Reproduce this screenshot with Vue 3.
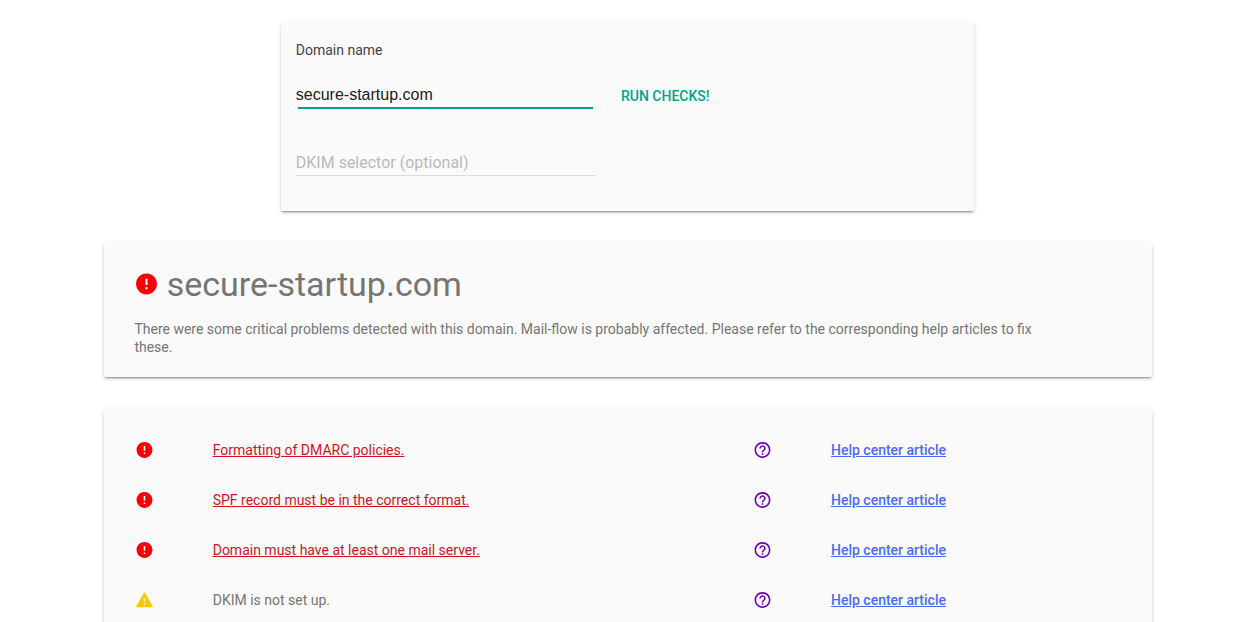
<script setup>
import { ref } from 'vue'

const domain = ref('secure-startup.com')
const selector = ref('')

const checks = [
  { level: 'error', text: 'Formatting of DMARC policies.' },
  { level: 'error', text: 'SPF record must be in the correct format.' },
  { level: 'error', text: 'Domain must have at least one mail server.' },
  { level: 'warning', text: 'DKIM is not set up.' },
]

const paths = {
  error: 'M12 2C6.48 2 2 6.48 2 12s4.48 10 10 10 10-4.48 10-10S17.52 2 12 2zm1 15h-2v-2h2v2zm0-4h-2V7h2v6z',
  warning: 'M1 21h22L12 2 1 21zm12-3h-2v-2h2v2zm0-4h-2v-4h2v4z',
  help: 'M11 18h2v-2h-2v2zm1-16C6.48 2 2 6.48 2 12s4.48 10 10 10 10-4.48 10-10S17.52 2 12 2zm0 18c-4.41 0-8-3.59-8-8s3.59-8 8-8 8 3.59 8 8-3.59 8-8 8zm0-14c-2.21 0-4 1.79-4 4h2c0-1.1.9-2 2-2s2 .9 2 2c0 2-3 1.75-3 5h2c0-2.25 3-2.5 3-5 0-2.21-1.79-4-4-4z',
}
</script>

<template>
  <main class="page">
    <form class="card form" @submit.prevent>
      <label class="label" for="domain">Domain name</label>
      <div class="line">
        <div class="field focused">
          <input id="domain" v-model="domain" class="input" type="text" />
        </div>
        <button class="run" type="submit">RUN CHECKS!</button>
      </div>
      <div class="field second">
        <input v-model="selector" class="input" type="text" placeholder="DKIM selector (optional)" />
      </div>
    </form>

    <section class="card summary">
      <h1 class="title">
        <svg class="icon large error" viewBox="0 0 24 24"><path :d="paths.error" /></svg>
        <span>{{ domain }}</span>
      </h1>
      <p class="message">
        There were some critical problems detected with this domain. Mail-flow is probably affected.
        Please refer to the corresponding help articles to fix these.
      </p>
    </section>

    <section class="card results">
      <div v-for="check in checks" :key="check.text" class="row">
        <svg class="icon" :class="check.level" viewBox="0 0 24 24"><path :d="paths[check.level]" /></svg>
        <span class="check" :class="{ failed: check.level === 'error' }">{{ check.text }}</span>
        <svg class="icon help" viewBox="0 0 24 24"><path :d="paths.help" /></svg>
        <a class="article" href="#">Help center article</a>
      </div>
    </section>
  </main>
</template>

<style>
html,
body {
  overflow: hidden;
  background: #fff;
}
</style>

<style scoped>
.page {
  box-sizing: border-box;
  height: 622px;
  overflow: hidden;
  padding-top: 23px;
  display: flex;
  flex-direction: column;
  align-items: center;
  font: 14px/18px Roboto, sans-serif;
  color: #757575;
}
.card {
  box-sizing: border-box;
  flex: none;
  background: #fafafa;
  border-radius: 2px;
  box-shadow: 0 2px 2px 0 rgba(0, 0, 0, 0.14), 0 1px 5px 0 rgba(0, 0, 0, 0.12),
    0 3px 1px -2px rgba(0, 0, 0, 0.2);
}
.form {
  width: 693px;
  height: 188px;
  margin-left: 1px;
  padding: 18px 14.8px;
}
.label {
  display: block;
  color: #444;
}
.line {
  display: flex;
  align-items: flex-start;
  margin-top: 18px;
}
.field {
  position: relative;
  width: 300px;
  height: 31px;
  box-sizing: border-box;
  border-bottom: 1px solid #dcdcdc;
}
.focused {
  height: 32px;
}
.focused::after {
  content: '';
  position: absolute;
  left: 2px;
  right: 3px;
  bottom: -1px;
  height: 2px;
  background: #009e8c;
}
.second {
  margin-top: 36px;
}
.input {
  display: block;
  width: 100%;
  height: 30px;
  margin: 0;
  padding: 5px 0 0;
  box-sizing: border-box;
  border: 0;
  outline: 0;
  background: transparent;
  font: 16px/20px "Liberation Sans", Arial, sans-serif;
  color: #212121;
}
.input::placeholder {
  font-family: Roboto, sans-serif;
  color: #b9b9b9;
  opacity: 1;
}
.run {
  margin: 10px 0 0 25.2px;
  padding: 0;
  border: 0;
  background: none;
  font: 500 14px/18px Roboto, sans-serif;
  color: #00a591;
}
.summary {
  width: 1048px;
  height: 134px;
  margin: 32px 0 0 2px;
  padding: 21px 30.4px 0;
}
.title {
  display: flex;
  align-items: center;
  gap: 7.3px;
  margin: 0;
  font-size: 34px;
  line-height: 40px;
  font-weight: 400;
}
.message {
  width: 920px;
  margin: 16px 0 0;
}
.icon {
  width: 19px;
  height: 20px;
  fill: currentColor;
}
.large {
  width: 25px;
  height: 26px;
}
.error {
  color: #fa0006;
}
.warning {
  color: #fdc605;
}
.help {
  color: #6a00b5;
}
.results {
  width: 1048px;
  height: 260px;
  margin: 32px 0 0 2px;
  padding: 16px 31px;
}
.row {
  display: grid;
  grid-template-columns: 77.7px 540.3px 78px 1fr;
  align-items: center;
  height: 50px;
}
.failed {
  color: #d01422;
  text-decoration: underline;
}
.article {
  color: #4d6bf5;
  font-weight: 500;
  text-decoration: underline;
}
</style>
